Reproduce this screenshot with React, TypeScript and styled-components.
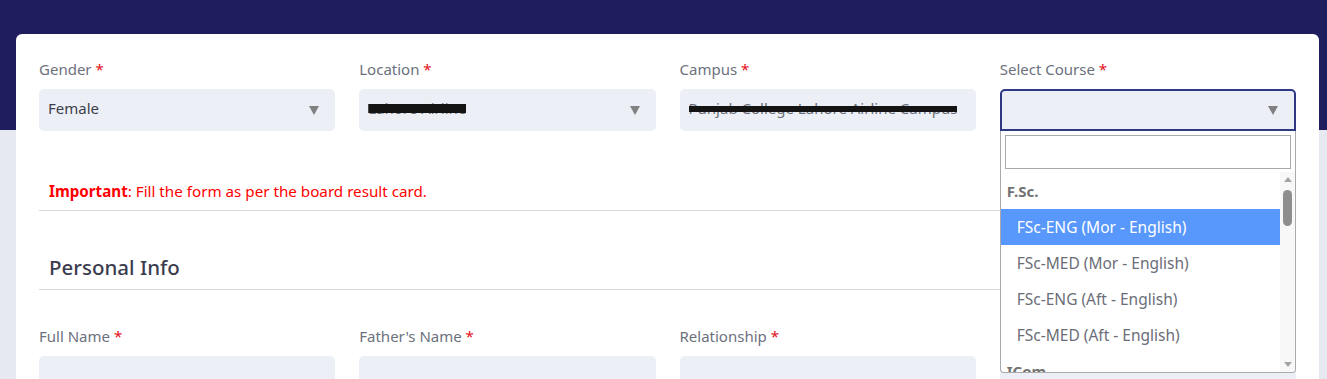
import styled, { createGlobalStyle } from "styled-components";

const GlobalStyle = createGlobalStyle`
  html, body {
    margin: 0;
    padding: 0;
  }
  body {
    font-family: "Noto Sans", "Open Sans", sans-serif;
    background: #e6e9f0;
  }
  * {
    box-sizing: border-box;
  }
`;

type Option = { group: string; items: string[] };

const courses: Option[] = [
  {
    group: "F.Sc.",
    items: [
      "FSc-ENG (Mor - English)",
      "FSc-MED (Mor - English)",
      "FSc-ENG (Aft - English)",
      "FSc-MED (Aft - English)",
    ],
  },
  {
    group: "ICom",
    items: [
      "ICom (Mor - English)",
      "ICom (Aft - English)",
      "ICom (Mor - Urdu)",
      "ICom (Aft - Urdu)",
    ],
  },
  {
    group: "ICS",
    items: [
      "ICS-Physics (Mor - English)",
      "ICS-Stats (Mor - English)",
      "ICS-Physics (Aft - English)",
    ],
  },
];

const App = () => {
  return (
    <>
      <GlobalStyle />
      <Page>
        <Card>
          <Grid>
            <Field>
              <Label>
                Gender <Req>*</Req>
              </Label>
              <Select>
                <Value>Female</Value>
                <Caret />
              </Select>
            </Field>
            <Field>
              <Label>
                Location <Req>*</Req>
              </Label>
              <Select>
                <Value>
                  <Redacted $thick={9}>Lahore Airline</Redacted>
                </Value>
                <Caret />
              </Select>
            </Field>
            <Field>
              <Label>
                Campus <Req>*</Req>
              </Label>
              <Select $plain>
                <Value>
                  <Redacted $thick={6}>Punjab College Lahore Airline Campus</Redacted>
                </Value>
              </Select>
            </Field>
            <Field>
              <Label>
                Select Course <Req>*</Req>
              </Label>
              <DropWrap>
                <Select $open>
                  <Value />
                  <Caret />
                </Select>
                <Dropdown>
                  <Search type='text' />
                  <Results>
                    <List>
                      {courses.map((c) => (
                        <div key={c.group}>
                          <GroupLabel>{c.group}</GroupLabel>
                          {c.items.map((item, i) => (
                            <Item key={item} $active={c.group === "F.Sc." && i === 0}>
                              {item}
                            </Item>
                          ))}
                        </div>
                      ))}
                    </List>
                    <ScrollBar>
                      <Arrow />
                      <Thumb />
                      <Arrow $down />
                    </ScrollBar>
                  </Results>
                </Dropdown>
              </DropWrap>
            </Field>
          </Grid>

          <Notice>
            <b>Important</b>: Fill the form as per the board result card.
          </Notice>

          <SectionTitle>Personal Info</SectionTitle>

          <Grid $top={36}>
            <Field>
              <Label>
                Full Name <Req>*</Req>
              </Label>
              <Select $plain />
            </Field>
            <Field>
              <Label>
                Father's Name <Req>*</Req>
              </Label>
              <Select $plain />
            </Field>
            <Field>
              <Label>
                Relationship <Req>*</Req>
              </Label>
              <Select>
                <Value />
                <Caret $low />
              </Select>
            </Field>
            <Field>
              <Label>
                Date of Birth <Req>*</Req>
              </Label>
              <Select $plain />
            </Field>
          </Grid>
        </Card>
      </Page>
    </>
  );
};

export default App;

const Page = styled.div`
  height: 379px;
  overflow: hidden;
  padding: 34px 8px 0 16px;
  background: linear-gradient(#1f1d5e 0, #1f1d5e 130px, #e6e9f0 130px);
`;

const Card = styled.div`
  background: #fff;
  border-radius: 6px 6px 0 0;
  padding: 25px 23px 40px;
`;

const Grid = styled.div<{ $top?: number }>`
  display: grid;
  grid-template-columns: repeat(4, 1fr);
  gap: 24px;
  margin-top: ${(p) => p.$top ?? 0}px;
`;

const Field = styled.div`
  display: flex;
  flex-direction: column;
`;

const Label = styled.div`
  font-size: 15px;
  line-height: 20px;
  color: #6c717d;
  margin-bottom: 10px;
`;

const Req = styled.span`
  color: #e3101a;
`;

const Select = styled.div<{ $open?: boolean; $plain?: boolean }>`
  height: 42px;
  display: flex;
  align-items: center;
  justify-content: space-between;
  padding: 0 ${(p) => (p.$plain ? 9 : 16)}px 4px 9px;
  background: #eceff6;
  border-radius: ${(p) => (p.$open ? "5px 5px 0 0" : "5px")};
  border: ${(p) => (p.$open ? "2px solid #2e3883" : "none")};
  overflow: hidden;
`;

const Value = styled.span`
  font-size: 15px;
  line-height: 20px;
  color: #3c3f4a;
  white-space: nowrap;
  overflow: hidden;
`;

const Redacted = styled.span<{ $thick: number }>`
  color: #6b6e78;
  text-decoration: line-through;
  text-decoration-color: #141414;
  text-decoration-thickness: ${(p) => p.$thick}px;
`;

const Caret = styled.span<{ $low?: boolean }>`
  width: 0;
  height: 0;
  border-left: 5px solid transparent;
  border-right: 5px solid transparent;
  border-top: 9px solid #808080;
  align-self: ${(p) => (p.$low ? "flex-end" : "center")};
  margin: ${(p) => (p.$low ? "0 0 -8px" : "4px 0 0")};
`;

const DropWrap = styled.div`
  position: relative;
`;

const Dropdown = styled.div`
  position: absolute;
  left: 0;
  right: 0;
  top: 42px;
  height: 242px;
  background: #fff;
  border: 1px solid #aaa;
  border-top: none;
  border-radius: 0 0 4px 4px;
  z-index: 10;
  display: flex;
  flex-direction: column;
  overflow: hidden;
`;

const Search = styled.input`
  flex: none;
  margin: 4px 4px 3px;
  height: 34px;
  border: 1px solid #aaa;
  outline: none;
  font-size: 14px;
  padding: 4px;
`;

const Results = styled.div`
  flex: 1;
  display: flex;
  min-height: 0;
`;

const List = styled.div`
  flex: 1;
  overflow: hidden;
  padding-top: 1px;
`;

const ScrollBar = styled.div`
  flex: none;
  width: 15px;
  display: flex;
  flex-direction: column;
  align-items: center;
  background: #f8f8f8;
  padding: 5px 0 5px;
`;

const Arrow = styled.span<{ $down?: boolean }>`
  width: 0;
  height: 0;
  border-left: 4px solid transparent;
  border-right: 4px solid transparent;
  ${(p) => (p.$down ? "border-top: 5px solid #a3a3a3;" : "border-bottom: 5px solid #a3a3a3;")}
  margin-top: ${(p) => (p.$down ? "auto" : "0")};
`;

const Thumb = styled.span`
  width: 9px;
  height: 36px;
  margin-top: 8px;
  border-radius: 5px;
  background: #8e8e8e;
`;

const GroupLabel = styled.div`
  height: 36px;
  line-height: 36px;
  padding-left: 6px;
  font-size: 15px;
  font-weight: 700;
  color: #727272;
  white-space: nowrap;
`;

const Item = styled.div<{ $active?: boolean }>`
  height: 36px;
  line-height: 36px;
  padding-left: 16px;
  font-size: 15.5px;
  white-space: nowrap;
  color: ${(p) => (p.$active ? "#fff" : "#6b6e78")};
  background: ${(p) => (p.$active ? "#5897fb" : "transparent")};
`;

const Notice = styled.div`
  margin-top: 50px;
  padding: 0 10px 9px;
  font-size: 15.2px;
  line-height: 20px;
  color: #f00;
  border-bottom: 1px solid #d8d8d8;
`;

const SectionTitle = styled.div`
  margin-top: 42px;
  padding: 0 10px 8px;
  font-size: 20.5px;
  line-height: 28px;
  font-weight: 500;
  color: #3b3c4e;
  border-bottom: 1px solid #d8d8d8;
`;
